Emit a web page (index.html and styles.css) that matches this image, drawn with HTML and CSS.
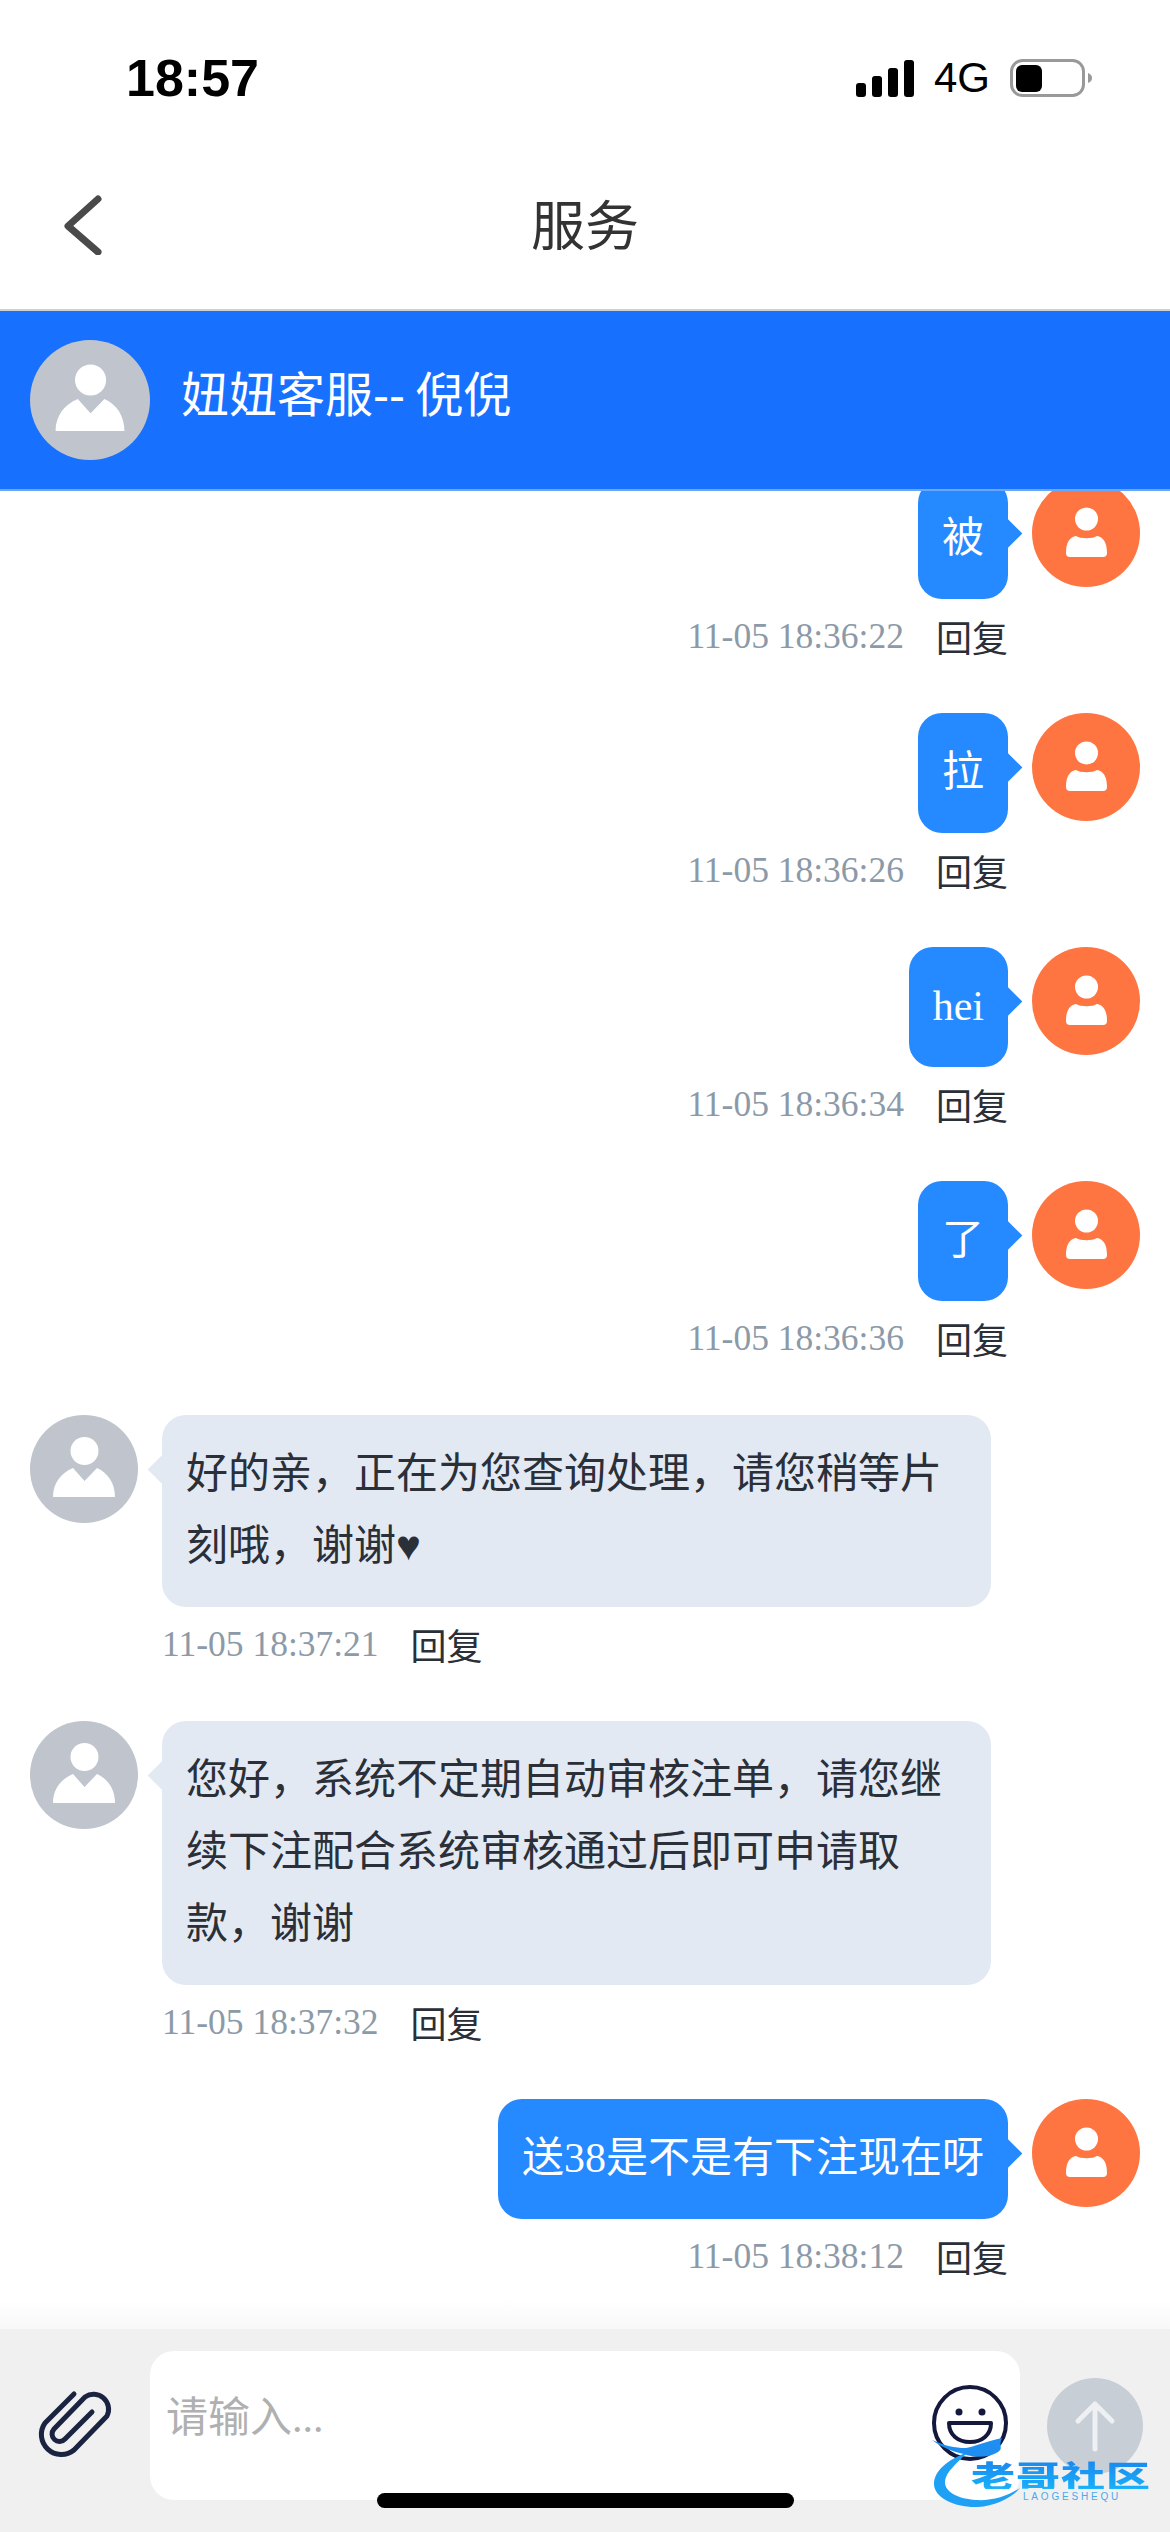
FILE: index.html
```html
<!DOCTYPE html>
<html lang="zh-CN">
<head>
<meta charset="utf-8">
<title>服务</title>
<link rel="stylesheet" href="styles.css">
</head>
<body>
<svg class="defs" width="0" height="0" aria-hidden="true">
  <symbol id="agent" viewBox="0 0 108 108">
    <circle cx="54" cy="54" r="54" fill="#bfc4cd"/>
    <ellipse cx="54.500" cy="36" rx="14" ry="14" fill="#fff"/>
    <path d="M23 82C23 68 31 58 43 53L54.500 66L67 53C78 58 85 68 85 82Z" fill="#fff"/>
  </symbol>
  <symbol id="user" viewBox="0 0 108 108">
    <circle cx="54" cy="54" r="54" fill="#ff7542"/>
    <circle cx="54.500" cy="40" r="11.500" fill="#fff"/>
    <path d="M38 78Q34 78 34 74C34 63 38 58 44 57C49 60 60 60 65 57C71 58 75 63 75 74Q75 78 71 78Z" fill="#fff"/>
  </symbol>
</svg>
<div class="app">
  <div class="status">
    <span class="clock">18:57</span>
    <div class="status-right">
      <svg class="signal" width="58" height="37" viewBox="0 0 58 37"><rect x="0" y="23" width="10" height="14" rx="3"/><rect x="16" y="16" width="10" height="21" rx="3"/><rect x="32" y="8" width="10" height="29" rx="3"/><rect x="48" y="0" width="10" height="37" rx="3"/></svg>
      <span class="net">4G</span>
      <svg class="battery" width="82" height="38" viewBox="0 0 82 38"><rect x="1.500" y="1.500" width="72" height="35" rx="11" fill="none" stroke="#999" stroke-width="3"/><rect x="6" y="6" width="26" height="27" rx="6" fill="#000"/><path d="M78 14C81 15 82 17 82 19C82 21 81 23 78 24Z" fill="#999"/></svg>
    </div>
  </div>
  <div class="nav">
    <svg class="back" width="40" height="60" viewBox="0 0 40 60"><path d="M35 4L5 31L35 57" fill="none" stroke="#4a4a4a" stroke-width="7" stroke-linecap="round" stroke-linejoin="round"/></svg>
    <span class="nav-title">服务</span>
  </div>
  <div class="agent-bar">
    <svg class="agent-avatar"><use href="#agent"/></svg>
    <span class="agent-name">妞妞客服-- 倪倪</span>
  </div>
  <div class="list">
    <div class="msg me first">
      <div class="row"><div class="bubble">被</div><svg class="avatar"><use href="#user"/></svg></div>
      <div class="meta"><span class="time">11-05 18:36:22</span><span class="reply">回复</span></div>
    </div>
    <div class="msg me">
      <div class="row"><div class="bubble">拉</div><svg class="avatar"><use href="#user"/></svg></div>
      <div class="meta"><span class="time">11-05 18:36:26</span><span class="reply">回复</span></div>
    </div>
    <div class="msg me">
      <div class="row"><div class="bubble">hei</div><svg class="avatar"><use href="#user"/></svg></div>
      <div class="meta"><span class="time">11-05 18:36:34</span><span class="reply">回复</span></div>
    </div>
    <div class="msg me">
      <div class="row"><div class="bubble">了</div><svg class="avatar"><use href="#user"/></svg></div>
      <div class="meta"><span class="time">11-05 18:36:36</span><span class="reply">回复</span></div>
    </div>
    <div class="msg them">
      <div class="row"><svg class="avatar"><use href="#agent"/></svg><div class="bubble">好的亲，正在为您查询处理，请您稍等片刻哦，谢谢♥</div></div>
      <div class="meta"><span class="time">11-05 18:37:21</span><span class="reply">回复</span></div>
    </div>
    <div class="msg them">
      <div class="row"><svg class="avatar"><use href="#agent"/></svg><div class="bubble">您好，系统不定期自动审核注单，请您继续下注配合系统审核通过后即可申请取款，谢谢</div></div>
      <div class="meta"><span class="time">11-05 18:37:32</span><span class="reply">回复</span></div>
    </div>
    <div class="msg me">
      <div class="row"><div class="bubble">送38是不是有下注现在呀</div><svg class="avatar"><use href="#user"/></svg></div>
      <div class="meta"><span class="time">11-05 18:38:12</span><span class="reply">回复</span></div>
    </div>
  </div>
  <div class="fade"></div>
  <div class="composer">
    <svg class="clip" width="80" height="76" viewBox="0 0 80 76"><path d="M38 4L9 33A20 20 0 0 0 38 60L71 26A15 15 0 0 0 49 7L18 39A7 7 0 0 0 29 49L56 22" fill="none" stroke="#1a2340" stroke-width="5" stroke-linecap="round" stroke-linejoin="round"/></svg>
    <div class="input">
      <span class="placeholder">请输入...</span>
      <svg class="smile" width="80" height="80" viewBox="0 0 80 80"><circle cx="40" cy="40" r="36" fill="none" stroke="#14183c" stroke-width="4"/><circle cx="29" cy="29" r="3.500" fill="#14183c"/><circle cx="52" cy="29" r="3.500" fill="#14183c"/><path d="M19 40H61C61 52 52 59 40 59C28 59 19 52 19 40Z" fill="none" stroke="#14183c" stroke-width="4" stroke-linejoin="round"/></svg>
    </div>
    <svg class="send" width="96" height="96" viewBox="0 0 96 96"><circle cx="48" cy="48" r="48" fill="#c8ced6"/><path d="M48 71V26M31 43L48 26L65 43" fill="none" stroke="#eef0f3" stroke-width="5" stroke-linecap="round" stroke-linejoin="round"/></svg>
  </div>
  <div class="home"></div>
  <div class="mark">
    <svg class="mark-swirl" width="100" height="72" viewBox="0 0 100 72"><path d="M36 14C14 22 2 34 2 46C2 60 24 70 46 69C62 68 80 60 88 50C76 58 60 63 44 62C26 61 12 54 13 43C14 34 24 26 36 14Z" fill="#1ea0f5"/><path d="M0 2C14 8 22 10 34 10C44 8 52 4 70 0C66 8 72 10 66 14C56 20 42 20 32 16C20 14 8 8 0 2Z" fill="#1e8ff0"/></svg>
    <span class="mark-name">老哥社区</span>
    <span class="mark-sub">LAOGESHEQU</span>
  </div>
</div>
</body>
</html>
```
FILE: styles.css
```css
* { box-sizing: border-box; }
html, body { margin: 0; padding: 0; background: #fff; }
.defs { position: absolute; }
.app {
  position: relative;
  width: 1170px;
  height: 2532px;
  overflow: hidden;
  display: flex;
  flex-direction: column;
  font-family: "Noto Sans CJK SC", sans-serif;
  color: #2a2f38;
}
.status {
  height: 140px;
  padding: 54px 78px 0 126px;
  display: flex;
  justify-content: space-between;
  align-items: flex-start;
  flex: none;
}
.clock {
  font: 700 52px/48px "Liberation Sans", sans-serif;
  color: #000;
}
.status-right { display: flex; align-items: center; height: 48px; }
.signal { fill: #000; margin-right: 20px; }
.net { font: 400 42px/48px "Liberation Sans", sans-serif; color: #000; margin-right: 20px; }
.nav {
  position: relative;
  height: 171px;
  flex: none;
  display: flex;
  align-items: center;
  justify-content: center;
  border-bottom: 2px solid #cfcfcf;
  padding-bottom: 3px;
}
.back { position: absolute; left: 63px; top: 55px; }
.nav-title { font-size: 54px; line-height: 72px; color: #333; }
.agent-bar {
  height: 180px;
  flex: none;
  background: #1870ff;
  border-bottom: 2px solid #6aa8ff;
  display: flex;
  align-items: center;
  padding-left: 30px;
  gap: 31px;
}
.agent-avatar { width: 120px; height: 120px; flex: none; }
.agent-name {
  font-family: "Liberation Sans", "Noto Sans CJK SC", sans-serif;
  font-size: 48px;
  line-height: 64px;
  color: #fff;
  margin-top: -8px;
  word-spacing: -3px;
}
.list { flex: 1; overflow: hidden; min-height: 0; }
.msg { padding: 0 30px; margin-bottom: 53px; }
.msg.first { margin-top: -12px; }
.row { display: flex; gap: 24px; align-items: flex-start; }
.me .row { justify-content: flex-end; }
.avatar { width: 108px; height: 108px; flex: none; }
.bubble {
  position: relative;
  padding: 23px 24px 25px;
  border-radius: 24px;
  font-family: "Liberation Serif", "Noto Sans CJK SC", serif;
  font-size: 42px;
  line-height: 72px;
  max-width: 829px;
}
.me .bubble { background: #2589ff; color: #fff; }
.them .bubble { background: #e3e9f2; color: #2a2f38; }
.bubble::after {
  content: "";
  position: absolute;
  top: 44px;
  width: 21px;
  height: 21px;
  transform: rotate(45deg);
}
.me .bubble::after { right: -10px; background: #2589ff; }
.them .bubble::after { left: -10px; background: #e3e9f2; }
.meta {
  display: flex;
  gap: 32px;
  align-items: center;
  height: 48px;
  margin-top: 13px;
}
.me .meta { justify-content: flex-end; padding-right: 132px; }
.them .meta { padding-left: 132px; }
.time {
  font-family: "Liberation Serif", serif;
  font-size: 35.500px;
  color: #8c9aa8;
}
.reply { font-size: 36px; color: #2a2f38; line-height: 48px; }
.fade {
  height: 29px;
  flex: none;
  background: linear-gradient(#fff, #f8f8f8);
}
.composer {
  height: 203px;
  flex: none;
  background: #f0f0f0;
  padding: 22px 27px 32px 36px;
  display: flex;
  align-items: center;
}
.clip { flex: none; margin: 5px 34px 0 0; }
.input {
  flex: 1;
  height: 149px;
  background: #fff;
  border-radius: 24px;
  padding: 31px 10px 0 16px;
  display: flex;
  justify-content: space-between;
  align-items: flex-start;
}
.placeholder {
  font-family: "Liberation Serif", "Noto Sans CJK SC", serif;
  font-size: 42px;
  line-height: 72px;
  color: #b0b0b0;
}
.smile { margin-top: 1px; flex: none; }
.send { flex: none; margin-left: 27px; }
.home {
  position: absolute;
  left: 377px;
  top: 2493px;
  width: 417px;
  height: 15px;
  border-radius: 8px;
  background: #000;
}
.mark { position: absolute; left: 932px; top: 2438px; width: 226px; height: 74px; }
.mark-swirl { position: absolute; left: 0; top: 0; }
.mark-name {
  position: absolute;
  left: 39px;
  top: 14px;
  font-size: 44px;
  line-height: 44px;
  font-weight: 900;
  letter-spacing: 1px;
  white-space: nowrap;
  background: linear-gradient(#1a86ee, #18b0fa);
  -webkit-background-clip: text;
  background-clip: text;
  color: transparent;
  transform: scaleY(.68);
}
.mark-sub {
  position: absolute;
  left: 91px;
  top: 53px;
  font: 400 10px/12px "Liberation Sans", sans-serif;
  letter-spacing: 2.800px;
  color: #4aa8ee;
}
```
